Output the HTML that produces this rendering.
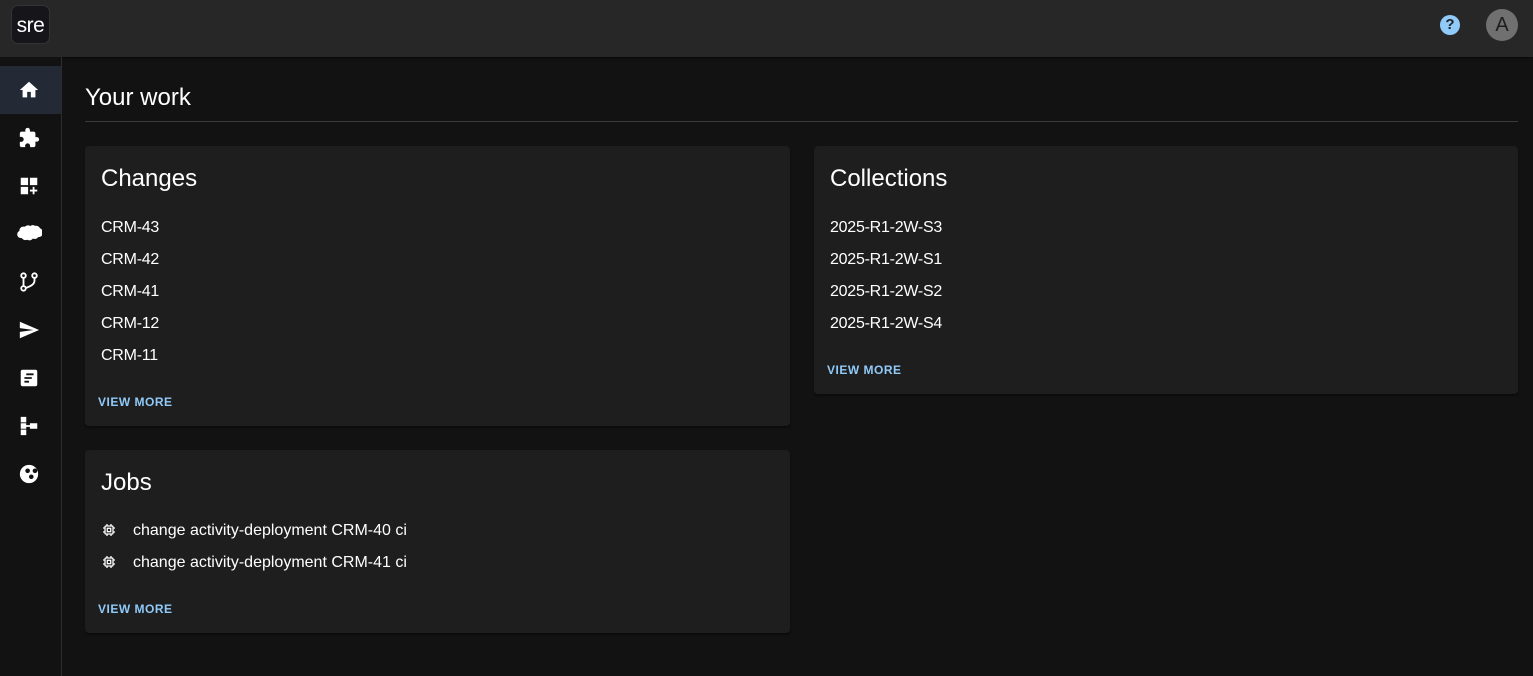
<!DOCTYPE html>
<html><head><meta charset="utf-8"><style>
*{box-sizing:border-box;margin:0;padding:0}
body{width:1533px;height:676px;background:#121212;font-family:"Liberation Sans",sans-serif;color:#fff;position:relative;overflow:hidden}
.top{position:absolute;left:0;top:0;width:1533px;height:57px;background:#272727;box-shadow:0 1px 3px rgba(0,0,0,.6)}
.logo{position:absolute;left:11px;top:5px;width:39px;height:39px;background:#15151a;border:1px solid #333;border-radius:7px;font-size:21px;line-height:39px;text-align:center;color:#fff;letter-spacing:-0.5px}
.help{position:absolute;left:1440px;top:15px;width:20px;height:20px;border-radius:50%;background:#90caf9;color:#222;font-weight:bold;font-size:15px;text-align:center;line-height:20px}
.av{position:absolute;left:1486px;top:9px;width:32px;height:32px;border-radius:50%;background:#707070;color:#1e1e1e;font-size:20px;text-align:center;line-height:32px}
.side{position:absolute;left:0;top:57px;width:62px;height:619px;background:#121212;border-right:1px solid #2c2c2c}
.act{position:absolute;left:0;top:9px;width:61px;height:48px;background:#232a35}
.side svg{position:absolute;left:18px;width:22px;height:22px;fill:#fff}
h1{position:absolute;left:85px;top:84px;font-size:24px;font-weight:normal}
.hr{position:absolute;left:85px;top:121px;width:1433px;height:1px;background:#3a3a3a}
.card{position:absolute;background:#1e1e1e;border-radius:4px;box-shadow:0 2px 2px rgba(0,0,0,.4)}
.card h2{position:absolute;left:16px;top:19px;font-size:24px;font-weight:normal}
.it{position:absolute;left:16px;font-size:16px;color:#fff;letter-spacing:-0.25px}
.job{letter-spacing:0}
.vm{position:absolute;left:13px;font-size:12px;color:#90caf9;letter-spacing:.5px;font-weight:bold}
</style></head><body>
<div class="top"><div class="logo">sre</div><div class="help">?</div><div class="av">A</div></div>
<div class="side"><div class="act"></div>
<svg viewBox="0 0 24 24" style="top:22px"><path d="M10 20v-6h4v6h5v-8h3L12 3 2 12h3v8z"/></svg>
<svg viewBox="0 0 24 24" style="top:70px"><path d="M20.5 11H19V7c0-1.1-.9-2-2-2h-4V3.5C13 2.12 11.88 1 10.5 1S8 2.12 8 3.5V5H4c-1.1 0-1.99.9-1.99 2v3.8H3.5c1.49 0 2.7 1.21 2.7 2.7s-1.21 2.7-2.7 2.7H2V20c0 1.1.9 2 2 2h3.8v-1.5c0-1.49 1.21-2.7 2.7-2.7 1.49 0 2.7 1.21 2.7 2.7V22H17c1.1 0 2-.9 2-2v-4h1.5c1.38 0 2.5-1.12 2.5-2.5S21.88 11 20.5 11z"/></svg>
<svg viewBox="0 0 24 24" style="top:118px"><path d="M3 3h8v8H3zm10 0h8v8h-8zM3 13h8v8H3zm15 0h-2v3h-3v2h3v3h2v-3h3v-2h-3z"/></svg>
<svg viewBox="2 3 21 16" style="top:166px;left:16px;width:26px;height:20px"><path d="M9 6c1.2-1.3 3.2-1.6 4.6-.6 1-.9 2.6-1 3.8-.2 1.6-.3 3.3.5 4 2 1.6.6 2.6 2.2 2.4 3.9-.2 2-2 3.4-3.9 3.2-.9 1.4-2.8 1.9-4.3 1.1-1 1.5-3 2-4.6 1.1-1.6.6-3.4 0-4.2-1.4C4.7 15.3 3 14 3 12.2c0-1.3.7-2.4 1.8-2.9-.2-1.8 1.3-3.4 3.1-3.4.4 0 .8.04 1.1.1z"/></svg>
<svg viewBox="0 0 24 24" style="top:214px"><g fill="none" stroke="#fff" stroke-width="2"><circle cx="6" cy="5" r="2.5"/><circle cx="18" cy="5" r="2.5"/><circle cx="6" cy="19" r="2.5"/><path d="M6 7.5v9M18 7.5v3c0 4-4 6-9.5 8"/></g></svg>
<svg viewBox="0 0 24 24" style="top:262px"><path d="M2.01 21 23 12 2.01 3 2 10l15 2-15 2z"/></svg>
<svg viewBox="0 0 24 24" style="top:310px"><path d="M5 3h14a2 2 0 0 1 2 2v14a2 2 0 0 1-2 2H5a2 2 0 0 1-2-2V5a2 2 0 0 1 2-2zm4 4v2h8V7zm-2 4v2h8v-2zm0 4v2h5v-2z" fill-rule="evenodd"/></svg>
<svg viewBox="0 0 24 24" style="top:358px"><path d="M3 2h6v6H3zm0 7h6v6H3zm0 7h6v6H3zm6-5h4v2H9zm4-2h8v6h-8z"/></svg>
<svg viewBox="0 0 24 24" style="top:406px"><path d="M12 2a10 10 0 1 0 0 20 10 10 0 0 0 0-20zM8 8.5a2.5 2.5 0 1 1 0 .01zm8 0a2.5 2.5 0 1 1 0 .01zM12 15a2.5 2.5 0 1 1 0 .01z" fill-rule="evenodd"/></svg>
</div>
<h1>Your work</h1><div class="hr"></div>
<div class="card" style="left:85px;top:146px;width:705px;height:280px"><h2>Changes</h2>
<div class="it" style="top:73px">CRM-43</div><div class="it" style="top:105px">CRM-42</div><div class="it" style="top:137px">CRM-41</div><div class="it" style="top:169px">CRM-12</div><div class="it" style="top:201px">CRM-11</div>
<div class="vm" style="top:249px">VIEW MORE</div></div>
<div class="card" style="left:814px;top:146px;width:704px;height:248px"><h2>Collections</h2>
<div class="it" style="top:73px">2025-R1-2W-S3</div><div class="it" style="top:105px">2025-R1-2W-S1</div><div class="it" style="top:137px">2025-R1-2W-S2</div><div class="it" style="top:169px">2025-R1-2W-S4</div>
<div class="vm" style="top:217px">VIEW MORE</div></div>
<div class="card" style="left:85px;top:450px;width:705px;height:183px"><h2>Jobs</h2>
<svg style="position:absolute;left:17px;top:73px" width="14" height="14" viewBox="0 0 14 14"><g fill="none" stroke="#fff" stroke-width="1.3"><rect x="3" y="3" width="8" height="8" rx="1"/><rect x="5.3" y="5.3" width="3.4" height="3.4"/><path d="M5 1v2M9 1v2M5 11v2M9 11v2M1 5h2M1 9h2M11 5h2M11 9h2"/></g></svg>
<div class="it job" style="top:72px;left:48px">change activity-deployment CRM-40 ci</div>
<svg style="position:absolute;left:17px;top:105px" width="14" height="14" viewBox="0 0 14 14"><g fill="none" stroke="#fff" stroke-width="1.3"><rect x="3" y="3" width="8" height="8" rx="1"/><rect x="5.3" y="5.3" width="3.4" height="3.4"/><path d="M5 1v2M9 1v2M5 11v2M9 11v2M1 5h2M1 9h2M11 5h2M11 9h2"/></g></svg>
<div class="it job" style="top:104px;left:48px">change activity-deployment CRM-41 ci</div>
<div class="vm" style="top:152px">VIEW MORE</div></div>
</body></html>
